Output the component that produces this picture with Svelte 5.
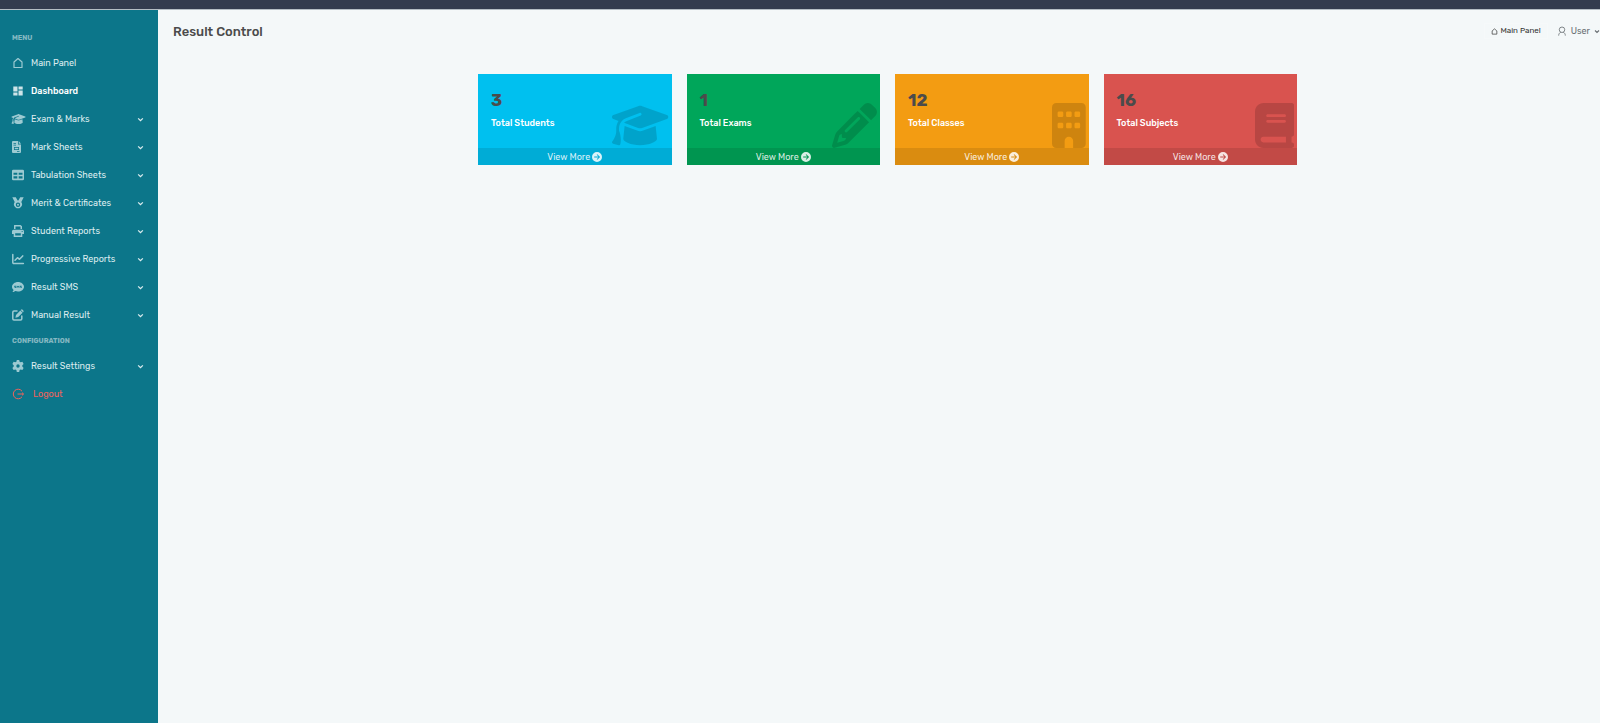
<script>
  const menu = [
    { label: 'Main Panel', icon: 'home' },
    { label: 'Dashboard', icon: 'grid', active: true },
    { label: 'Exam & Marks', icon: 'cap', sub: true },
    { label: 'Mark Sheets', icon: 'file', sub: true },
    { label: 'Tabulation Sheets', icon: 'table', sub: true },
    { label: 'Merit & Certificates', icon: 'medal', sub: true },
    { label: 'Student Reports', icon: 'print', sub: true },
    { label: 'Progressive Reports', icon: 'chart', sub: true },
    { label: 'Result SMS', icon: 'sms', sub: true },
    { label: 'Manual Result', icon: 'edit', sub: true }
  ]

  const config = [
    { label: 'Result Settings', icon: 'gear', sub: true },
    { label: 'Logout', icon: 'logout', danger: true }
  ]

  const cards = [
    { value: 3, label: 'Total Students', color: 'aqua', icon: 'cap', width: 640 },
    { value: 1, label: 'Total Exams', color: 'green', icon: 'pencil', width: 512 },
    { value: 12, label: 'Total Classes', color: 'orange', icon: 'building', width: 384 },
    { value: 16, label: 'Total Subjects', color: 'red', icon: 'book', width: 448 }
  ]

  const shapes = {
    cap: 'M320 32c-8.1 0-16.1 1.4-23.7 4.1L15.8 137.4C6.3 140.9 0 149.9 0 160s6.3 19.1 15.8 22.6l57.9 20.9C57.3 229.3 48 259.8 48 291.9v28.1c0 28.4-10.8 57.7-22.3 80.8c-6.5 13-13.9 25.8-22.5 37.6C0 442.7-.9 448.3 .9 453.4s6 8.9 11.2 10.2l64 16c4.2 1.1 8.7 .3 12.4-2s6.3-6.1 7.1-10.4c8.6-42.8 4.3-81.2-2.1-108.7C90.3 344.3 86.5 329.8 80 316.5V291.9c0-30.2 10.2-58.7 27.9-81.5c12.9-15.5 29.6-28 49.2-35.7l157-61.7c8.2-3.2 17.5 .8 20.7 9s-.8 17.5-9 20.7l-157 61.7c-12.4 4.9-23.3 12.4-32.2 21.6l159.6 57.6c7.6 2.7 15.6 4.1 23.7 4.1s16.1-1.4 23.7-4.1L624.2 182.6c9.5-3.4 15.8-12.5 15.8-22.6s-6.3-19.1-15.8-22.6L343.7 36.1C336.1 33.4 328.1 32 320 32zM128 408c0 35.3 86 72 192 72s192-36.7 192-72L496.7 262.6 354.5 314c-11.1 4-22.8 6-34.5 6s-23.5-2-34.5-6L143.3 262.6 128 408z',
    pencil: 'M410.3 231l11.3-11.3-33.9-33.9-62.1-62.1L291.7 89.8l-11.3 11.3-22.6 22.6L58.6 322.9c-10.4 10.4-18 23.3-22.2 37.4L1 480.7c-2.5 8.4-.2 17.5 6.1 23.7s15.3 8.5 23.7 6.1l120.3-35.4c14.1-4.2 27-11.8 37.4-22.2L387.7 253.7 410.3 231zM160 399.4l-9.1 22.7c-4 3.1-8.5 5.4-13.3 6.9L59.4 452l23-78.1c1.4-4.9 3.8-9.4 6.9-13.3l22.7-9.1v32c0 8.8 7.2 16 16 16h32zM362.7 18.7L348.3 33.2 325.7 55.8 314.3 67.1l33.9 33.9 62.1 62.1 33.9 33.9 11.3-11.3 22.6-22.6 14.5-14.5c25-25 25-65.5 0-90.5L453.3 18.7c-25-25-65.5-25-90.5 0zm-47.4 168l-144 144c-6.2 6.2-16.4 6.2-22.6 0s-6.2-16.4 0-22.6l144-144c6.2-6.2 16.4-6.2 22.6 0s6.2 16.4 0 22.6z',
    building: 'M48 0C21.5 0 0 21.5 0 48V464c0 26.5 21.5 48 48 48h96V432c0-26.5 21.5-48 48-48s48 21.5 48 48v80h96c26.5 0 48-21.5 48-48V48c0-26.5-21.5-48-48-48H48zM64 240c0-8.8 7.2-16 16-16h32c8.8 0 16 7.2 16 16v32c0 8.8-7.2 16-16 16H80c-8.8 0-16-7.2-16-16V240zm112-16h32c8.8 0 16 7.2 16 16v32c0 8.8-7.2 16-16 16H176c-8.8 0-16-7.2-16-16V240c0-8.8 7.2-16 16-16zm80 16c0-8.8 7.2-16 16-16h32c8.8 0 16 7.2 16 16v32c0 8.8-7.2 16-16 16H272c-8.8 0-16-7.2-16-16V240zM80 96h32c8.8 0 16 7.2 16 16v32c0 8.8-7.2 16-16 16H80c-8.8 0-16-7.2-16-16V112c0-8.8 7.2-16 16-16zm80 16c0-8.8 7.2-16 16-16h32c8.8 0 16 7.2 16 16v32c0 8.8-7.2 16-16 16H176c-8.8 0-16-7.2-16-16V112zM272 96h32c8.8 0 16 7.2 16 16v32c0 8.8-7.2 16-16 16H272c-8.8 0-16-7.2-16-16V112c0-8.8 7.2-16 16-16z',
    book: 'M96 0C43 0 0 43 0 96V416c0 53 43 96 96 96H384h32c17.7 0 32-14.3 32-32s-14.3-32-32-32V384c17.7 0 32-14.3 32-32V32c0-17.7-14.3-32-32-32H384 96zm0 384H352v64H96c-17.7 0-32-14.3-32-32s14.3-32 32-32zm32-240c0-8.8 7.2-16 16-16H336c8.8 0 16 7.2 16 16s-7.2 16-16 16H144c-8.8 0-16-7.2-16-16zm16 48H336c8.8 0 16 7.2 16 16s-7.2 16-16 16H144c-8.8 0-16-7.2-16-16s7.2-16 16-16z'
  }
</script>

{#snippet chevron()}
  <svg class="chevron" viewBox="0 0 6 6" aria-hidden="true">
    <path d="M1 2l2 2 2-2" fill="none" stroke="currentColor" stroke-width="1.1" />
  </svg>
{/snippet}

{#snippet house()}
  <path d="M2 5L6 1.500 10 5v5.500H2z" fill="none" stroke="currentColor" stroke-width="1.2" stroke-linejoin="round" />
{/snippet}

{#snippet menuIcon(name)}
  <svg class="icon" viewBox="0 0 12 12" fill="currentColor" aria-hidden="true">
    {#if name === 'cap'}
      <path d={shapes.cap} transform="translate(-.5 .4) scale(.022)" />
    {:else if name === 'home'}
      {@render house()}
    {:else if name === 'grid'}
      <path d="M1.3 1.500h4.200v5H1.300zM6.500 1.500h4.200v3H6.500zM1.300 7.500h4.200v3H1.300zM6.500 5.500h4.200v5H6.500z" />
    {:else if name === 'file'}
      <path fill-rule="evenodd" d="M1.500 0h4.500v3.500H9V11a1 1 0 0 1-1 1H1a1 1 0 0 1-1-1V1a1 1 0 0 1 1-1zM1.500 2v.7H4V2zM1.500 3.800v.7H4v-.7zM2 6v3h5V6zM2.700 6.700h3.600v1.600H2.700zM5 10v.7h2.500V10z" />
      <path d="M6.700 0L9 2.700H6.700z" />
    {:else if name === 'table'}
      <path fill-rule="evenodd" d="M1.300.8h9.400A1.300 1.300 0 0 1 12 2.100v7.800a1.300 1.300 0 0 1-1.300 1.300H1.300A1.300 1.300 0 0 1 0 9.900V2.100A1.300 1.300 0 0 1 1.300.8zM1.500 3.800v2h3.800v-2zM6.700 3.800v2h3.800v-2zM1.500 7.300v2.200h3.800V7.300zM6.700 7.300v2.200h3.800V7.300z" />
    {:else if name === 'medal'}
      <path fill-rule="evenodd" d="M.3.200h3.500L5.600 3.600h.8L8.200.2h3.500L9.300 4.900a4 4 0 1 1-6.600 0zM6 5.500a2.200 2.200 0 1 0 0 4.400 2.200 2.200 0 0 0 0-4.400z" />
      <circle cx="6" cy="7.700" r="1" />
    {:else if name === 'print'}
      <path fill-rule="evenodd" d="M2.500 0h6L10 1.300V4H8.500V1.800L8 1.400H3.500V4H2V.3zM1.500 4.700h9A1.500 1.500 0 0 1 12 6.200V9h-1.700v3H1.700V9H0V6.200a1.500 1.500 0 0 1 1.500-1.500zM3.200 8.300v2.300h5.600V8.300zM9.700 6v.9h.9V6z" />
    {:else if name === 'chart'}
      <path d="M.8 1.500V9.500a1 1 0 0 0 1 1h9.600M3 7.300l2.500-2.600 2 1.600 3.200-3.400" fill="none" stroke="currentColor" stroke-width="1.500" stroke-linecap="round" stroke-linejoin="round" />
    {:else if name === 'sms'}
      <path fill-rule="evenodd" d="M6 1c3.300 0 6 2.200 6 4.800s-2.700 4.800-6 4.800c-.9 0-1.800-.2-2.600-.5-.7.5-1.800 1-3 1 .6-.6 1-1.400 1.200-2.100C.6 8.100 0 7 0 5.800 0 3.200 2.700 1 6 1zM4 4.700H2.300v1.400h1v.3h-1V7H4V5.500H3v-.2h1zM4.600 4.700V7h.6V5.900l.8.700.8-.7V7h.6V4.700h-.5l-.9.900-.9-.9zM9.700 4.700H8v1.400h1v.3H8V7h1.700V5.500h-1v-.2h1z" />
    {:else if name === 'edit'}
      <path d="M5 2H2a1.200 1.200 0 0 0-1.200 1.200v6.600A1.200 1.200 0 0 0 2 11h6.600a1.200 1.200 0 0 0 1.200-1.200V7" fill="none" stroke="currentColor" stroke-width="1.500" stroke-linecap="round" />
      <path d="M8.300 1.400l2.300 2.300-4.400 4.400-2.800.6.6-2.800zM9 .7a1.200 1.200 0 0 1 1.600 0l.7.700a1.200 1.200 0 0 1 0 1.600l-.3.300L8.700 1z" />
    {:else if name === 'gear'}
      <path fill-rule="evenodd" d="M4.800 0h2.400l.4 1.700 1.100.6 1.700-.5 1.200 2.100-1.300 1.300v1.400l1.300 1.300-1.200 2.100-1.700-.5-1.100.6L7.200 12H4.800l-.4-1.900-1.100-.6-1.700.5L.4 7.900l1.300-1.300V5.200L.4 3.900l1.200-2.100 1.700.5 1.100-.6zM6 4.300a1.700 1.700 0 1 0 0 3.400 1.700 1.700 0 0 0 0-3.400z" />
    {:else if name === 'logout'}
      <path d="M10 3.200A4.800 4.800 0 1 0 10 8.800M5.500 6h6M10 4.600L11.500 6 10 7.400" fill="none" stroke="currentColor" />
    {/if}
  </svg>
{/snippet}

{#snippet navList(items)}
  <ul>
    {#each items as item}
      <li>
        <a href="#{item.icon}" class:active={item.active} class:danger={item.danger}>
          {@render menuIcon(item.icon)}
          <span class="label">{item.label}</span>
          {#if item.sub}{@render chevron()}{/if}
        </a>
      </li>
    {/each}
  </ul>
{/snippet}

<div class="page">
  <div class="topbar"></div>
  <div class="body">
    <nav class="sidebar">
      <h2>MENU</h2>
      {@render navList(menu)}
      <h2>CONFIGURATION</h2>
      {@render navList(config)}
    </nav>

    <main>
      <header>
        <h1>Result Control</h1>
        <div class="actions">
          <a class="panel-link" href="#home">
            <svg viewBox="0 0 12 12" aria-hidden="true">{@render house()}</svg>
            Main Panel
          </a>
          <button class="user">
            <svg viewBox="0 0 12 12" fill="none" stroke="currentColor" aria-hidden="true">
              <circle cx="6" cy="4.500" r="3.300" />
              <path d="M2 11.500c0-2 1.200-3.500 2.400-4M10 11.500c0-2-1.200-3.500-2.400-4" />
            </svg>
            User
            {@render chevron()}
          </button>
        </div>
      </header>

      <div class="content">
        <div class="cards">
          {#each cards as card}
            <section class="card {card.color}">
              <div class="inner">
                <h3>{card.value}</h3>
                <p>{card.label}</p>
              </div>
              <svg class="backdrop" viewBox="0 0 {card.width} 512" aria-hidden="true">
                <path d={shapes[card.icon]} fill="currentColor" />
              </svg>
              <a class="more" href="#{card.icon}">
                View More
                <svg viewBox="0 0 10 10" aria-hidden="true">
                  <path fill="currentColor" fill-rule="evenodd" d="M5 0a5 5 0 1 1 0 10A5 5 0 0 1 5 0zM5.300 2.200l-.6.600L6.400 4.500H2.200v1h4.200L4.700 7.200l.6.600L8.100 5z" />
                </svg>
              </a>
            </section>
          {/each}
        </div>
      </div>
    </main>
  </div>
</div>

<style>
  :global(body) {
    background: #f4f8f9;
    overflow: hidden;
  }

  .page {
    display: flex;
    flex-direction: column;
    min-height: 100vh;
    font-family: Rubik, Roboto, sans-serif;
    font-size: 9px;
  }

  h1, h2, h3, p, ul {
    margin: 0;
    padding: 0;
  }

  a {
    color: inherit;
    text-decoration: none;
  }

  .topbar {
    height: 9px;
    background: #343c4e;
    border-bottom: 1px solid #b5bdc3;
  }

  .body {
    display: flex;
    flex: 1;
  }

  .sidebar {
    box-sizing: border-box;
    flex: 0 0 158px;
    padding-top: 20px;
    background: #0c768a;
    color: #dcecef;
  }

  .sidebar h2 {
    padding-left: 12px;
    color: #84b8c2;
    font-size: 7px;
    font-weight: 700;
    line-height: 16px;
  }

  .sidebar ul {
    list-style: none;
    padding: 3px 0 4px;
  }

  .sidebar li a {
    display: flex;
    align-items: center;
    gap: 7px;
    height: 28px;
    padding: 0 14px 0 12px;
  }

  .icon {
    width: 12px;
    height: 12px;
    overflow: visible;
    color: #9ccad2;
  }

  .label {
    flex: 1;
  }

  .active {
    color: #fff;
    font-weight: 500;
  }

  .active .icon {
    color: #cee4e8;
  }

  .danger,
  .danger .icon {
    color: #f0625b;
  }

  .danger .label {
    padding-left: 2px;
  }

  .chevron {
    width: 7px;
    height: 7px;
  }

  main {
    flex: 1;
  }

  header {
    display: flex;
    align-items: center;
    justify-content: space-between;
    height: 42px;
    padding-left: 15px;
    color: #4b4b4b;
  }

  h1 {
    font-size: 13px;
    font-weight: 500;
  }

  .actions {
    display: flex;
    align-items: center;
    gap: 9px;
  }

  .panel-link {
    display: flex;
    align-items: center;
    gap: 2px;
    padding: 0 6px;
    border: 1px solid #f6f9fa;
    color: #333;
    font-size: 8px;
    line-height: 14px;
  }

  .panel-link svg {
    width: 7px;
    height: 7px;
  }

  .user {
    display: flex;
    align-items: center;
    gap: 4px;
    padding: 0;
    border: 0;
    background: none;
    color: #6a7074;
    font: inherit;
  }

  .user svg:first-child {
    width: 10px;
    height: 10px;
  }

  .user .chevron {
    width: 6px;
  }

  .content {
    padding: 22px 0 0 17px;
  }

  .cards {
    display: grid;
    grid-template-columns: repeat(4, 1fr);
    gap: 15px;
    max-width: 819px;
    margin: 0 auto;
  }

  .card {
    position: relative;
    color: #fff;
  }

  .inner {
    padding: 15px 13px 13px;
  }

  h3 {
    color: #4b4b4b;
    font-size: 17px;
    font-weight: 700;
    line-height: 22px;
  }

  p {
    font-weight: 500;
    line-height: 24px;
  }

  .backdrop {
    position: absolute;
    right: 3px;
    bottom: 17px;
    height: 45px;
    color: rgba(0, 0, 0, 0.15);
  }

  .more {
    display: flex;
    align-items: center;
    justify-content: center;
    gap: 2px;
    height: 17px;
    background: rgba(0, 0, 0, 0.1);
    color: rgba(255, 255, 255, 0.85);
  }

  .more svg {
    width: 10px;
    height: 10px;
  }

  .aqua {
    background: #00c0ef;
  }

  .green {
    background: #00a65a;
  }

  .orange {
    background: #f39c12;
  }

  .red {
    background: #d9534f;
  }
</style>
